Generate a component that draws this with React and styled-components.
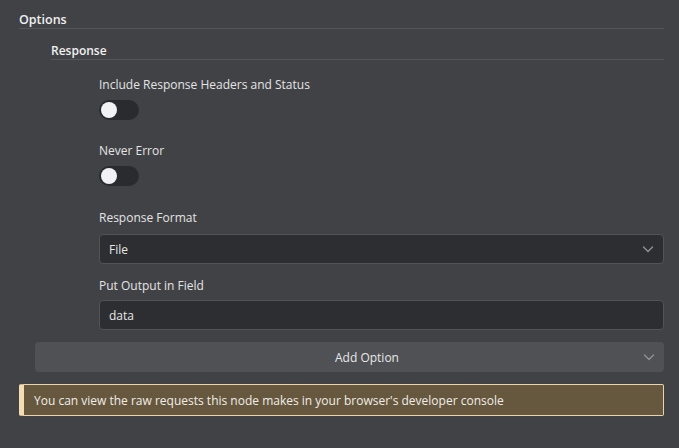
import styled, { createGlobalStyle } from 'styled-components';

const GlobalStyle = createGlobalStyle`
  html, body {
    margin: 0;
    padding: 0;
    background: #414245;
  }
  body {
    font-family: "Open Sans", "Liberation Sans", sans-serif;
    color: #e2e2e3;
  }
`;

const Page = styled.div`
  width: 679px;
  height: 448px;
  box-sizing: border-box;
  padding: 11px 15px 0 19px;
  background: #414245;
  overflow: hidden;
`;

const SectionTitle = styled.div`
  font-size: ${(p) => (p.small ? '12px' : '12.5px')};
  font-weight: 600;
  line-height: 17px;
  color: #f0f0f1;
  border-bottom: 1px solid #55565a;
  margin-top: ${(p) => p.top || 0}px;
`;

const Nested = styled.div`
  padding-left: ${(p) => p.indent}px;
`;

const Label = styled.div`
  font-size: 12px;
  line-height: 18px;
  color: #e4e4e5;
  margin-top: ${(p) => p.top}px;
`;

const Toggle = styled.div`
  width: 40px;
  height: 20px;
  border-radius: 10px;
  background: #2a2b2e;
  margin-top: 6px;
  position: relative;

  &::after {
    content: '';
    position: absolute;
    left: 2px;
    top: 2px;
    width: 16px;
    height: 16px;
    border-radius: 50%;
    background: #f2f2f4;
  }
`;

const Field = styled.div`
  height: 30px;
  box-sizing: border-box;
  margin-top: ${(p) => p.top}px;
  background: #2d2e31;
  border: 1px solid #525357;
  border-radius: 4px;
  display: flex;
  align-items: center;
  justify-content: space-between;
  padding: 0 8px 0 9px;
  font-size: 12px;
  color: #e6e6e7;
`;

const AddOption = styled.div`
  margin-top: 12px;
  margin-left: -16px;
  height: 30px;
  box-sizing: border-box;
  padding-left: 35px;
  border-radius: 4px;
  background: #505154;
  display: flex;
  align-items: center;
  justify-content: center;
  position: relative;
  font-size: 12px;
  color: #e8e8e9;

  svg {
    position: absolute;
    right: 8px;
    top: 8px;
  }
`;

const Notice = styled.div`
  margin-top: 12px;
  height: 32px;
  box-sizing: border-box;
  background: #66573f;
  border: 1px solid #ead4aa;
  border-left: 5px solid #f4ddb2;
  border-radius: 2px;
  display: flex;
  align-items: center;
  padding-left: 10px;
  font-size: 12px;
  color: #f1ede6;
`;

function Chevron() {
  return (
    <svg width="14" height="14" viewBox="0 0 14 14" fill="none">
      <path d="M2.5 5l4.5 4.5L11.5 5" stroke="#8f9094" strokeWidth="1.4" strokeLinecap="round" strokeLinejoin="round" />
    </svg>
  );
}

export default function App() {
  return (
    <Page>
      <GlobalStyle />
      <SectionTitle>Options</SectionTitle>
      <Nested indent={32}>
        <SectionTitle small top={13}>Response</SectionTitle>
        <Nested indent={48}>
          <Label top={16}>Include Response Headers and Status</Label>
          <Toggle />
          <Label top={22}>Never Error</Label>
          <Toggle />
          <Label top={23}>Response Format</Label>
          <Field top={7}>
            File
            <Chevron />
          </Field>
          <Label top={13}>Put Output in Field</Label>
          <Field top={5}>data</Field>
        </Nested>
        <AddOption>
          Add Option
          <Chevron />
        </AddOption>
      </Nested>
      <Notice>You can view the raw requests this node makes in your browser's developer console</Notice>
    </Page>
  );
}
